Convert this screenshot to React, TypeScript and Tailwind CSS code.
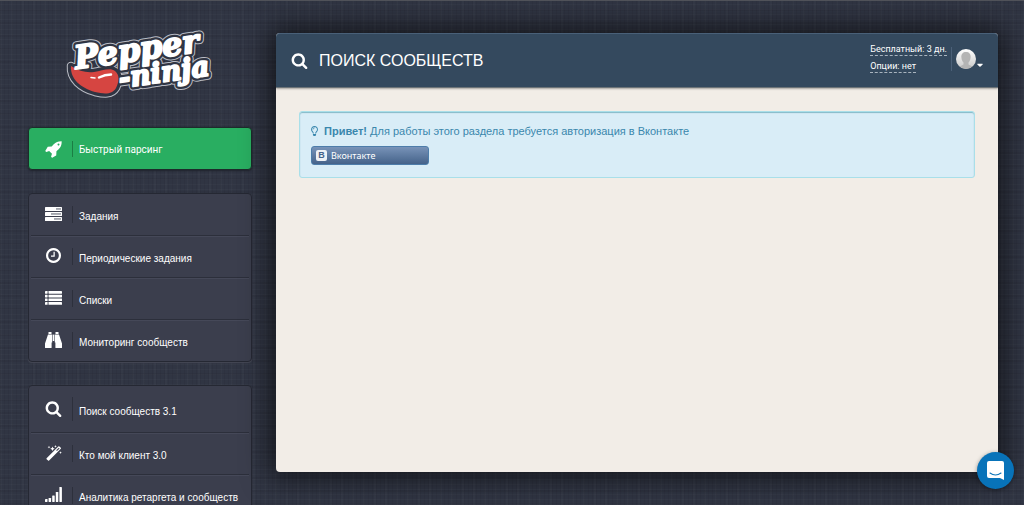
import type { ReactNode } from "react";
import { FaCaretDown, FaRegLightbulb } from "react-icons/fa";

function SearchIcon({ className }: { className?: string }) {
  return (
    <svg viewBox="0 0 1792 1792" fill="currentColor" className={className}>
      <path d="M1216 832q0-185-131.5-316.5t-316.5-131.5-316.5 131.5-131.5 316.5 131.5 316.5 316.5 131.5 316.5-131.5 131.5-316.5zm512 832q0 52-38 90t-90 38q-54 0-90-38l-343-342q-179 124-399 124-143 0-273.5-55.5t-225-150-150-225-55.5-273.5 55.5-273.5 150-225 225-150 273.5-55.5 273.5 55.5 225 150 150 225 55.5 273.5q0 220-124 399l343 343q37 37 37 90z" />
    </svg>
  );
}

function RocketIcon() {
  return (
    <svg viewBox="0 0 1792 1792" fill="currentColor" className="size-[18px]">
      <path d="M1440 448q0-40-28-68t-68-28-68 28-28 68 28 68 68 28 68-28 28-68zm224-288q0 249-75.5 430.5t-253.5 360.5q-81 80-195 176l-20 379q-2 16-16 26l-384 224q-7 4-16 4-12 0-23-9l-64-64q-13-14-8-32l85-276-281-281-276 85q-3 1-9 1-14 0-23-9l-64-64q-17-19-5-39l224-384q10-14 26-16l379-20q96-114 176-195 188-187 358-258t431-71q14 0 24 9.5t10 22.5z" />
    </svg>
  );
}

function ClockIcon() {
  return (
    <svg viewBox="128 128 1536 1536" fill="currentColor" className="size-[15px]">
      <path d="M1024 544v448q0 14-9 23t-23 9h-320q-14 0-23-9t-9-23v-64q0-14 9-23t23-9h224v-352q0-14 9-23t23-9h64q14 0 23 9t9 23zm416 352q0-148-73-273t-198-198-273-73-273 73-198 198-73 273 73 273 198 198 273 73 273-73 198-198 73-273zm224 0q0 209-103 385.5t-279.5 279.5-385.5 103-385.5-103-279.5-279.5-103-385.5 103-385.5 279.5-279.5 385.5-103 385.5 103 279.5 279.5 103 385.5z" />
    </svg>
  );
}

function TasksIcon() {
  return (
    <svg viewBox="0 0 17 14" className="h-3.5 w-[17px]">
      <g fill="#fff">
        <rect width="17" height="4" rx=".6" />
        <rect y="5" width="17" height="4" rx=".6" />
        <rect y="10" width="17" height="4" rx=".6" />
      </g>
      <g fill="#7d808b">
        <rect x="11" y="1.3" width="5" height="1.3" />
        <rect x="6" y="6.3" width="10" height="1.3" />
        <rect x="9" y="11.3" width="7" height="1.3" />
      </g>
    </svg>
  );
}

function ListIcon() {
  return (
    <svg viewBox="0 0 17 14" fill="#fff" className="h-3.5 w-[17px]">
      {[0, 3.7, 7.4, 11.1].map((y) => (
        <g key={y}>
          <rect y={y} width="2.6" height="2.7" rx=".4" />
          <rect x="3.5" y={y} width="13.5" height="2.7" rx=".4" />
        </g>
      ))}
    </svg>
  );
}

function BinocularsIcon() {
  const barrel = "M3.500 0H6.500V2H3.500ZM3 2.600H7.200V10.500H6.600V15.500Q6.600 16 6 16H.6Q0 16 0 15.500V11.500Z";
  return (
    <svg viewBox="0 0 17 16" fill="#fff" className="h-4 w-[17px]">
      <path d={barrel} />
      <path d={barrel} transform="matrix(-1 0 0 1 17 0)" />
      <path d="M7.700 2.600H9.300V9H7.700Z" />
    </svg>
  );
}

function WandIcon() {
  return (
    <svg viewBox="0 0 16 16" fill="#fff" className="size-4">
      <path d="M.6 13.200L12.300 1.400Q12.900 .9 13.400 1.400L14.800 2.800Q15.300 3.300 14.800 3.800L3.100 15.600Q2.600 16 2.100 15.600L.6 14.200Q.2 13.700 .6 13.200Z" />
      <path d="M10.200 5.300L12.800 2.700L13.600 3.500L11 6.100Z" fill="#3b3e4d" />
      <path d="M3 .8l.4 1 1 .4-1 .4-.4 1-.4-1-1-.4 1-.4zM6.500 1.500l.7 1.500 1.500.7-1.500.7-.7 1.500-.7-1.500-1.500-.7 1.500-.7zM9.500 0l.4 1 1 .4-1 .4-.4 1-.4-1-1-.4 1-.4zM14.500 6.300l.4 1 1 .4-1 .4-.4 1-.4-1-1-.4 1-.4z" />
    </svg>
  );
}

function SignalIcon() {
  return (
    <svg viewBox="0 0 17 15" fill="#fff" className="h-[15px] w-[17px]">
      <rect y="12" width="2.5" height="3" rx=".4" />
      <rect x="3.6" y="11" width="2.5" height="4" rx=".4" />
      <rect x="7.2" y="8.5" width="2.5" height="6.5" rx=".4" />
      <rect x="10.8" y="5" width="2.5" height="10" rx=".4" />
      <rect x="14.4" y="0" width="2.5" height="15" rx=".4" />
    </svg>
  );
}

function Logo() {
  const words = (
    <>
      <text fontSize="32" transform="translate(14 43) rotate(-8)">Pepper</text>
      <text fontSize="28" transform="translate(58 62) rotate(-8)">-ninja</text>
    </>
  );
  const pepper = (
    <path d="M9 40C17 45 24 47 32 46C40 45 48 41 53 45C58 49 57 56 54 62C50 69 42 68 33 66C19 62 8 53 9 40Z" />
  );
  return (
    <svg viewBox="0 0 156 76" className="h-[76px] w-[156px] overflow-visible" aria-label="Pepper-ninja">
      <g strokeLinejoin="round" fontFamily="DejaVu Serif, serif" fontWeight="bold" fontStyle="italic">
        <g stroke="#b9bcc4" fill="#b9bcc4" strokeWidth="8.500">
          {words}
          {pepper}
        </g>
        <g stroke="#303543" fill="#303543" strokeWidth="6.500">
          {words}
          {pepper}
        </g>
        <g fill="#d64541">{pepper}</g>
        <g fill="none" stroke="#fff" strokeLinecap="round">
          <path d="M37 51.500q6-3 12-3" strokeWidth="2.500" />
          <path d="M29 51.500l4 .5" strokeWidth="1.500" />
        </g>
        <g fill="#fff" stroke="#fff" strokeWidth="2">{words}</g>
      </g>
    </svg>
  );
}

function NavItem({ icon, label, tall }: { icon: ReactNode; label: string; tall?: boolean }) {
  return (
    <li className="mx-0.5 border-t border-[#2c2f3b] shadow-[inset_0_1px_#454858] first:border-t-0 first:shadow-none">
      <a href="#" className={`flex items-center pl-3.5 ${tall ? "h-[46px]" : "h-[41px]"}`}>
        <span className="flex w-[17px] shrink-0 justify-center pb-0.5">{icon}</span>
        <span className={`ml-2.5 w-px shrink-0 bg-[#2d303c] ${tall ? "h-6" : "h-[17px]"}`} />
        <span className="ml-1.5 pt-1 whitespace-nowrap">{label}</span>
      </a>
    </li>
  );
}

function NavGroup({ children }: { children: ReactNode }) {
  return (
    <ul className="rounded border border-[#252833] bg-[#3b3e4d] shadow-[0_1px_1px_#454855]">
      {children}
    </ul>
  );
}

export default function App() {
  return (
    <div className="flex h-screen gap-6 overflow-hidden border-t border-[#505259] bg-[#303543] bg-[repeating-linear-gradient(0deg,rgba(255,255,255,0.02)_0_1px,transparent_1px_5px),repeating-linear-gradient(0deg,rgba(0,0,0,0.05)_0_2px,transparent_2px_13px),repeating-linear-gradient(90deg,rgba(0,0,0,0.05)_0_1px,transparent_1px_4px),repeating-linear-gradient(90deg,rgba(255,255,255,0.02)_0_2px,transparent_2px_11px)] pr-[26px] pl-7 font-['Liberation_Sans',Arial,sans-serif] text-[10px] text-white">
      <aside className="w-56 shrink-0">
        <div className="flex h-[126px] justify-center pt-[25px]">
          <a href="#" className="h-[76px]">
            <Logo />
          </a>
        </div>

        <nav className="flex flex-col gap-[23px]">
          <a
            href="#"
            className="flex h-[43px] items-center rounded border border-[#1d2c2b] bg-[#29ae61] pl-4 shadow-[0_1px_2px_#20232d]"
          >
            <RocketIcon />
            <span className="ml-[9px] h-4 w-px bg-[#1b7d44]" />
            <span className="ml-1.5 pt-0.5 font-[Roboto,sans-serif]">Быстрый парсинг</span>
          </a>

          <NavGroup>
            <NavItem icon={<TasksIcon />} label="Задания" />
            <NavItem icon={<ClockIcon />} label="Периодические задания" />
            <NavItem icon={<ListIcon />} label="Списки" />
            <NavItem icon={<BinocularsIcon />} label="Мониторинг сообществ" />
          </NavGroup>

          <NavGroup>
            <NavItem icon={<SearchIcon className="size-[17px]" />} label="Поиск сообществ 3.1" tall />
            <NavItem icon={<WandIcon />} label="Кто мой клиент 3.0" />
            <NavItem icon={<SignalIcon />} label="Аналитика ретаргета и сообществ" />
          </NavGroup>
        </nav>
      </aside>

      <main className="my-8 mb-[33px] flex min-w-0 flex-1 flex-col rounded bg-[#f2ede7] shadow-[0_0_28px_6px_rgba(0,0,0,0.6)]">
        <header className="flex h-[55px] shrink-0 items-center rounded-t border-t border-b border-t-[#496078] border-b-[#6d7478] bg-[#34495e] px-[15px] shadow-[0_1px_2px_rgba(0,0,0,0.3)]">
          <SearchIcon className="size-[17px]" />
          <h1 className="ml-[11px] text-base">ПОИСК СООБЩЕСТВ</h1>
          <div className="mb-1 ml-auto flex items-center">
            <div className="mb-0.5 flex flex-col items-start gap-1 font-[Roboto,sans-serif] text-[9px] leading-3">
              <a href="#" className="border-b border-dashed border-[#a9b4bf]">Бесплатный: 3 дн.</a>
              <a href="#" className="border-b border-dashed border-[#a9b4bf]">Опции: нет</a>
            </div>
            <span className="ml-1 h-6 w-px bg-[#4b6078]" />
            <button type="button" aria-label="Профиль" className="ml-1 flex items-center">
              <svg viewBox="0 0 20 20" className="size-5">
                <defs>
                  <linearGradient id="avatar" x2="0" y2="1">
                    <stop stopColor="#fff" />
                    <stop offset="1" stopColor="#c8c8c8" />
                  </linearGradient>
                  <clipPath id="round">
                    <circle cx="10" cy="10" r="10" />
                  </clipPath>
                </defs>
                <g clipPath="url(#round)">
                  <path fill="url(#avatar)" d="M0 0h20v20H0z" />
                  <path fill="#b4b4b4" d="M10 3c3 0 5 2 4.600 5.500C14.400 11 13.500 12.500 12.500 13.500V15.500L17 18V20H3V18L7.500 15.500V13.500C6.500 12.500 5.600 11 5.400 8.500C5 5 7 3 10 3Z" />
                </g>
              </svg>
              <FaCaretDown className="mt-3 ml-px h-2.5 w-1.5" />
            </button>
          </div>
        </header>

        <section className="mx-[23px] mt-[23px] h-[67px] rounded-[3px] border border-[#a9dfe9] bg-[#d9edf7] px-[11px] pt-[11px] text-[11px] text-[#3a87ad] shadow-[inset_0_1px_1px_#83b8c7]">
          <p className="flex items-center leading-4">
            <FaRegLightbulb className="mr-1.5 h-2.5 w-[7px]" />
            <span>
              <strong>Привет!</strong> Для работы этого раздела требуется авторизация в Вконтакте
            </span>
          </p>
          <button
            type="button"
            className="mt-[7px] flex h-[19px] w-[118px] items-center gap-1 rounded-[3px] border border-[#4d7daa] bg-linear-to-b from-[#7893b8] to-[#45638a] pl-1 font-['Noto_Sans',sans-serif] text-[9px] text-white"
          >
            <span className="flex size-[11px] items-center justify-center rounded-xs bg-[#eef1f5] font-['Liberation_Sans',sans-serif] font-bold text-[#45638a]">
              B
            </span>
            Вконтакте
          </button>
        </section>
      </main>

      <button
        type="button"
        aria-label="Открыть чат"
        className="absolute right-2.5 bottom-4 flex size-[37px] items-center justify-center rounded-full bg-[#0873b9] shadow-[0_1px_4px_rgba(0,0,0,0.4)]"
      >
        <svg viewBox="0 0 17 19" className="h-[19px] w-[17px]">
          <path fill="#fff" d="M2 0h13q2 0 2 2v17l-4-2H2q-2 0-2-2V2q0-2 2-2z" />
          <path d="M3 12q5.500 4 11 0" fill="none" stroke="#0873b9" strokeWidth="1.100" strokeLinecap="round" />
        </svg>
      </button>
    </div>
  );
}
